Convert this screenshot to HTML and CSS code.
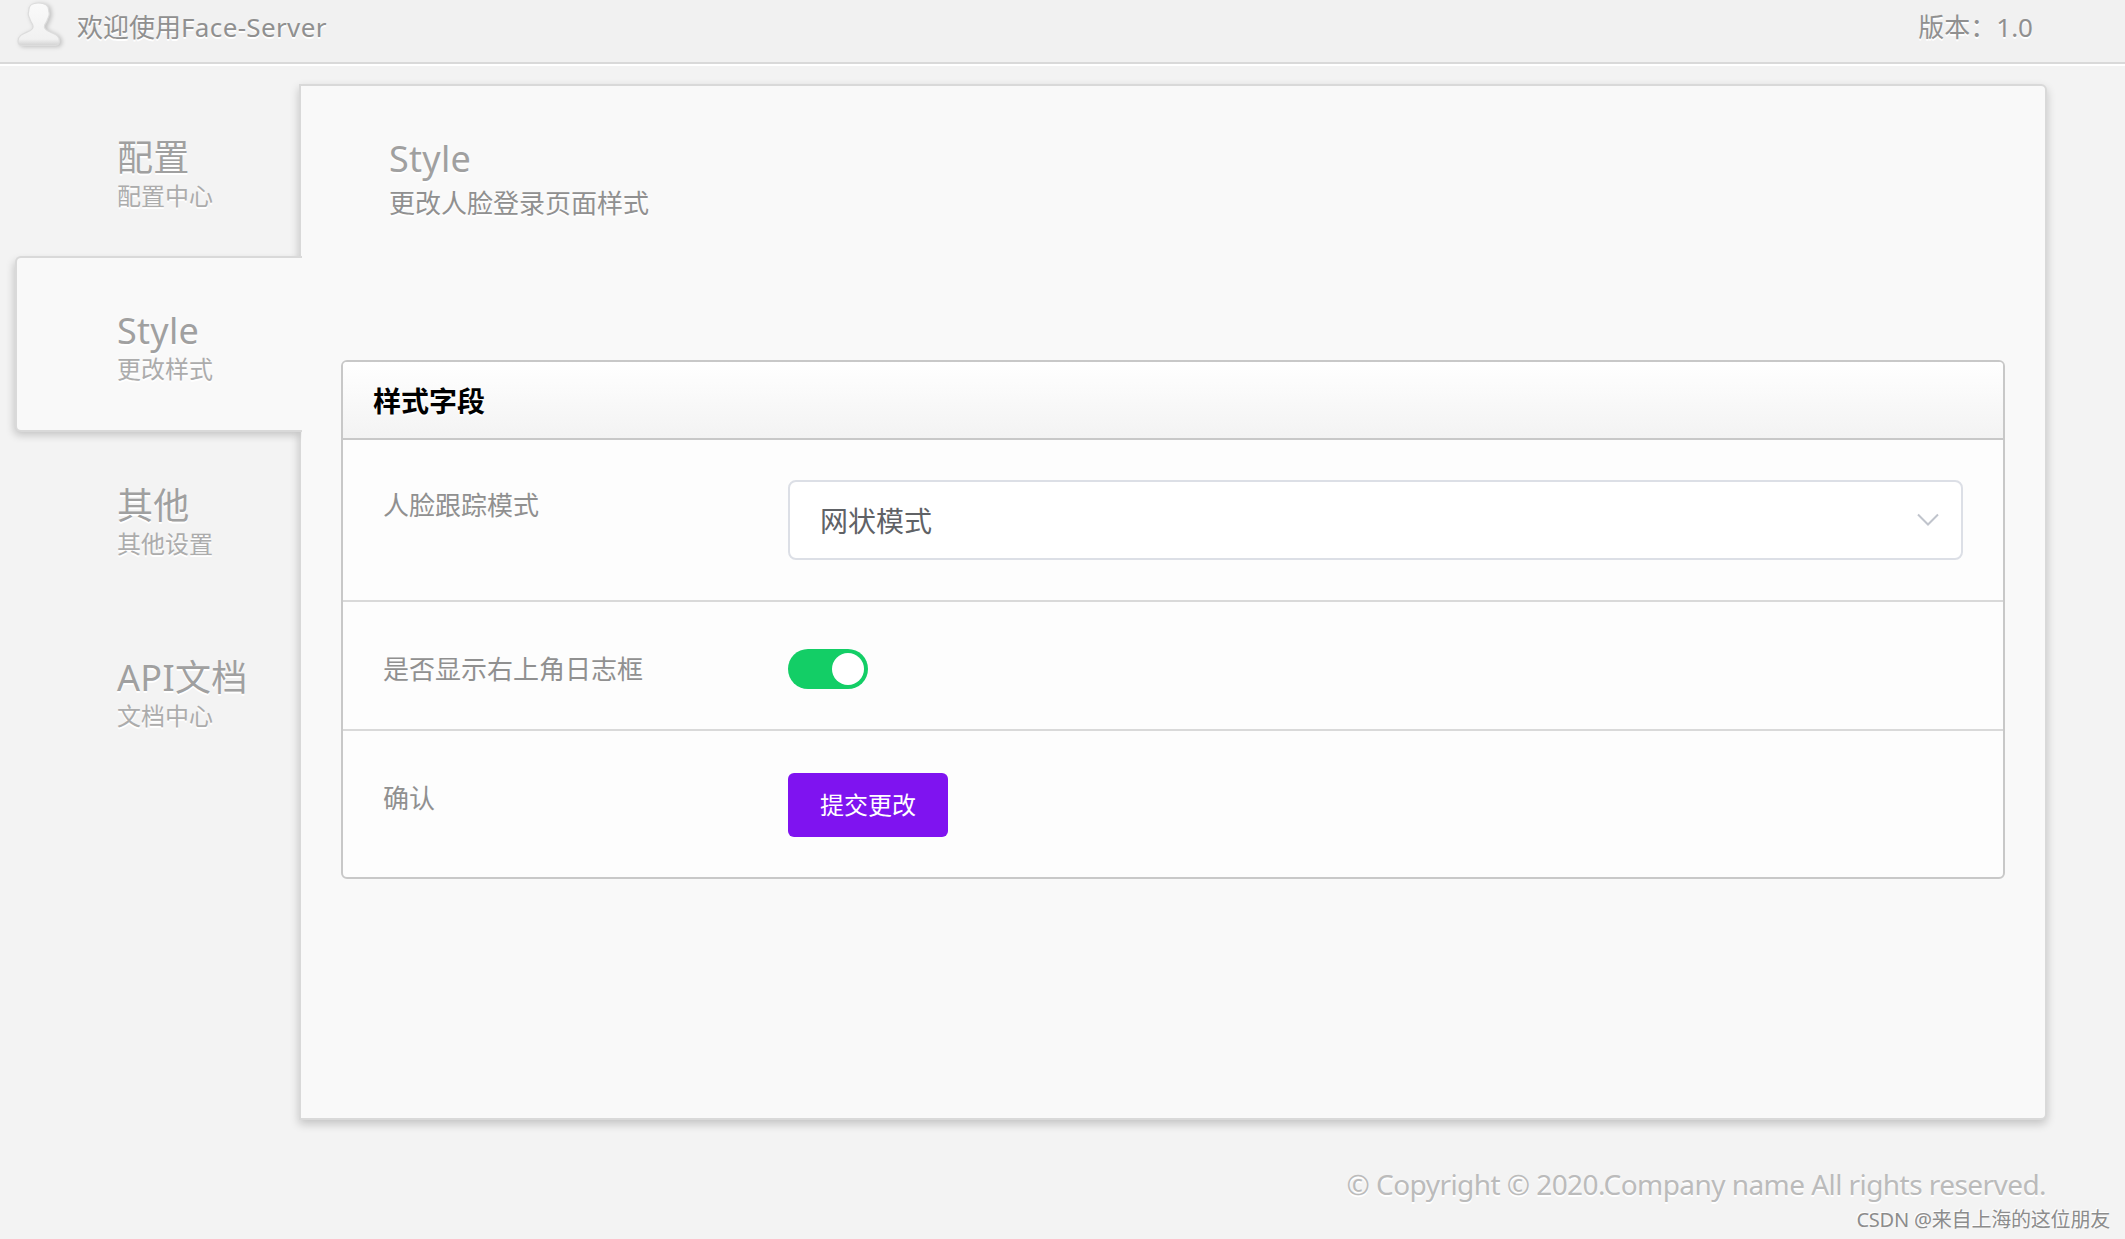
FILE: index.html
```html
<!DOCTYPE html>
<html lang="zh-CN">
<head>
  <meta charset="UTF-8">
  <title>Face-Server</title>
  <link rel="stylesheet" href="styles.css">
</head>
<body>

<header class="topbar">
  <svg class="avatar" width="48" height="48" viewBox="0 0 48 48">
    <defs>
      <linearGradient id="userFill" x1="0" y1="0" x2="0" y2="1">
        <stop offset="0" stop-color="#fafafa"/>
        <stop offset="0.85" stop-color="#f1f1f1"/>
        <stop offset="1" stop-color="#d2d2d2"/>
      </linearGradient>
    </defs>
    <path fill="url(#userFill)" stroke="#dcdcdc" stroke-width="1.2" d="M22.500 3C16 3 12.800 5.500 12.800 10c0 2-.8 2.500-.5 4.500.3 2.500 1.200 3 1.700 5 .6 2.500 2 3.500 2.800 5.500.8 2.500-.3 4.500-3.300 6C9 33.300 2 34.500 2 41c0 3 1.500 4.500 4.500 4.500h32c3 0 5-1.500 5-4.500 0-6.500-7-7.700-11.500-10-3-1.500-4.100-3.500-3.300-6 .8-2 2.200-3 2.800-5.500.5-2 1.400-2.500 1.700-5 .3-2-.5-2.500-.5-4.500C32.700 5.500 29 3 22.500 3z"/>
  </svg>
  <span class="welcome">欢迎使用<span class="latin">Face-Server</span></span>
  <span class="version">版本：1.0</span>
</header>

<div class="main">
  <nav class="tabs">
    <a class="tab">
      <span class="tab-title">配置</span>
      <span class="tab-sub">配置中心</span>
    </a>
    <a class="tab active">
      <span class="tab-title">Style</span>
      <span class="tab-sub">更改样式</span>
    </a>
    <a class="tab">
      <span class="tab-title">其他</span>
      <span class="tab-sub">其他设置</span>
    </a>
    <a class="tab">
      <span class="tab-title">API文档</span>
      <span class="tab-sub">文档中心</span>
    </a>
  </nav>

  <section class="content">
    <h1>Style</h1>
    <p class="desc">更改人脸登录页面样式</p>

    <div class="box">
      <h2>样式字段</h2>
      <div class="row row-select">
        <label>人脸跟踪模式</label>
        <div class="select">
          <span>网状模式</span>
          <svg width="24" height="14" viewBox="0 0 24 14">
            <path d="M2 1.500L12 11.500L22 1.500" fill="none" stroke="#c0c4cc" stroke-width="2"/>
          </svg>
        </div>
      </div>
      <div class="row row-switch">
        <label>是否显示右上角日志框</label>
        <div class="switch"></div>
      </div>
      <div class="row row-submit">
        <label>确认</label>
        <button class="submit">提交更改</button>
      </div>
    </div>
  </section>
</div>

<footer class="footer">© Copyright © 2020.Company name All rights reserved.</footer>
<div class="watermark">CSDN @来自上海的这位朋友</div>

</body>
</html>
```
FILE: styles.css
```css
* {
  box-sizing: border-box;
}

body {
  margin: 0;
  height: 1239px;
  overflow: hidden;
  background: #f3f3f3;
  font-family: "Noto Sans", "Noto Sans CJK SC", sans-serif;
  font-size: 26px;
  color: #909090;
  text-shadow: 0 2px 0 #fff;
}

h1, h2, p {
  margin: 0;
  font-weight: normal;
}

.topbar {
  display: flex;
  height: 64px;
  padding: 0 92px 0 16px;
  background: #f1f1f1;
  border-bottom: 2px solid #d9d9d9;
  box-shadow: 0 2px 0 #fff;
  line-height: 54px;
}

.avatar {
  flex: none;
  filter: drop-shadow(2px 1px 2px rgba(0, 0, 0, 0.2));
}

.welcome {
  margin-left: 13px;
}

.latin {
  letter-spacing: 0.35px;
}

.version {
  margin-left: auto;
}

.main {
  display: flex;
  height: 1036px;
  margin-top: 20px;
  padding-left: 15px;
}

.tabs {
  width: 284px;
}

.tab {
  display: flex;
  flex-direction: column;
  height: 172px;
  padding: 50px 0 0 102px;
}

.tab-title {
  font-size: 36px;
  line-height: 48px;
  letter-spacing: 0.3px;
  color: #a0a0a0;
}

.tab-sub {
  font-size: 24px;
  line-height: 28px;
  color: #acacac;
}

/* the open tab runs over the left border of the content panel */
.tab.active {
  position: relative;
  z-index: 1;
  width: 287px;
  height: 176px;
  padding: 49px 0 0 100px;
  background: #f9f9f9;
  border: 2px solid #d9d9d9;
  border-right: none;
  border-radius: 6px 0 0 6px;
  box-shadow: -2px 4px 8px -1px rgba(0, 0, 0, 0.2);
  clip-path: inset(-10px 0 -20px -20px);
}

.content {
  width: 1748px;
  padding: 49px 40px 0;
  background: #f9f9f9;
  border: 2px solid #d9d9d9;
  border-radius: 0 6px 6px 0;
  box-shadow: 0 4px 10px rgba(0, 0, 0, 0.2);
}

h1 {
  padding-left: 48px;
  font-size: 36px;
  line-height: 48px;
  letter-spacing: 0.3px;
  color: #a0a0a0;
}

.desc {
  padding-left: 48px;
  line-height: 40px;
}

.box {
  margin-top: 137px;
  background: #fdfdfd;
  border: 2px solid #c8c8c8;
  border-radius: 6px;
  overflow: hidden;
}

h2 {
  height: 78px;
  padding-left: 30px;
  background: linear-gradient(#fff, #f3f3f3);
  border-bottom: 2px solid #c8c8c8;
  font-size: 28px;
  font-weight: bold;
  line-height: 78px;
  color: #000;
}

.row {
  display: grid;
  grid-template-columns: 405px 1fr;
  align-items: start;
  padding: 40px;
  border-bottom: 2px solid #d9d9d9;
  text-shadow: none;
}

.row label {
  line-height: 50px;
}

.row-switch {
  height: 129px;
  padding-top: 47px;
}

.row-switch label {
  margin-top: -5px;
}

.row-submit {
  height: 146px;
  padding-top: 42px;
  border-bottom: none;
}

.select {
  display: flex;
  align-items: center;
  justify-content: space-between;
  height: 80px;
  padding: 0 21px 0 30px;
  background: #fff;
  border: 2px solid #dcdfe6;
  border-radius: 8px;
  font-size: 28px;
  color: #606266;
}

.switch {
  width: 80px;
  height: 40px;
  padding: 4px;
  background: #13ce66;
  border-radius: 20px;
}

.switch::after {
  content: "";
  display: block;
  width: 32px;
  height: 32px;
  margin-left: auto;
  background: #fff;
  border-radius: 50%;
}

.submit {
  width: 160px;
  height: 64px;
  padding: 0 0 3px;
  background: #7f13f0;
  border: none;
  border-radius: 6px;
  font-family: inherit;
  font-size: 24px;
  color: #fff;
}

.footer {
  margin-top: 42px;
  padding-right: 79px;
  font-size: 28px;
  line-height: 44px;
  letter-spacing: -0.56px;
  text-align: right;
  color: #bbb;
}

.watermark {
  padding-right: 15px;
  font-size: 20px;
  line-height: 28px;
  letter-spacing: -0.2px;
  text-align: right;
  color: #8c8c8c;
  text-shadow: -1px -1px 0 #fff;
}
```
